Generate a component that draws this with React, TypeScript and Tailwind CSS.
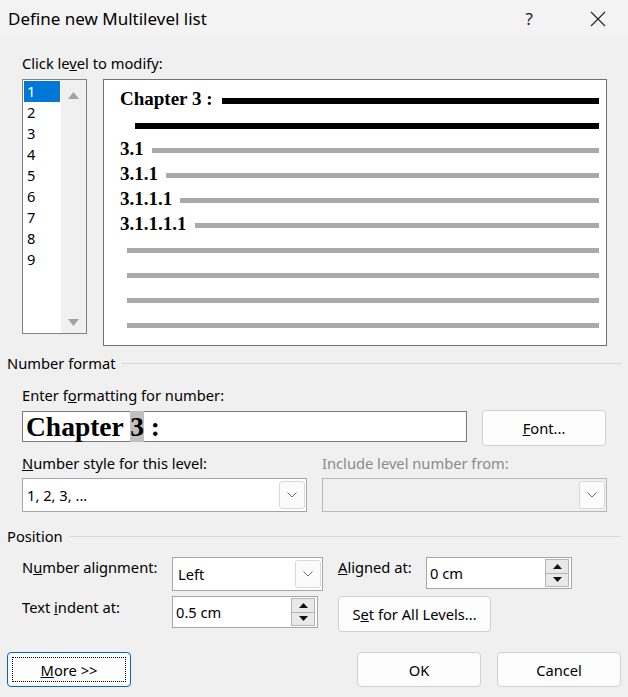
const ui = { fontFamily: '"Noto Sans", "Open Sans", sans-serif' };
const serif = { fontFamily: '"Liberation Serif", "Times New Roman", serif' };

const Chevron = () => (
  <svg width="10" height="6" viewBox="0 0 10 6" fill="none">
    <path d="M0.5 0.5 L5 5 L9.5 0.5" stroke="#6b6b6b" strokeWidth="1" />
  </svg>
);

const Combo = ({ value, disabled, className }: { value?: string; disabled?: boolean; className: string }) => (
  <div
    className={`flex items-center border ${
      disabled ? "bg-[#f0f0f0] border-[#b9b9b9]" : "bg-white border-[#a6a6a6]"
    } ${className}`}
  >
    <div className="flex-1 pl-[4px] leading-[20px] text-black">{value}</div>
    <div className="mr-[1px] flex h-[28px] w-[26px] items-center justify-center rounded-[3px] border border-[#d8d8d8] bg-[#fbfbfb]">
      <Chevron />
    </div>
  </div>
);

const Tri = ({ up }: { up?: boolean }) => (
  <svg width="9" height="5" viewBox="0 0 9 5">
    <path d={up ? "M0 5 L4.5 0 L9 5 Z" : "M0 0 L4.5 5 L9 0 Z"} fill="#111" />
  </svg>
);

const Spin = ({ value, className }: { value: string; className: string }) => (
  <div className={`flex items-center border border-[#a6a6a6] bg-white ${className}`}>
    <div className="flex-1 pl-[3px] leading-[20px] text-black">{value}</div>
    <div className="mr-[2px] flex h-[28px] w-[24px] flex-col">
      <div className="flex flex-1 items-center justify-center border border-b-0 border-[#b4b4b4] bg-[#e9e9e9]">
        <Tri up />
      </div>
      <div className="flex flex-1 items-center justify-center border border-[#b4b4b4] bg-[#e9e9e9]">
        <Tri />
      </div>
    </div>
  </div>
);

const Btn = ({ children, className }: { children: React.ReactNode; className: string }) => (
  <div
    className={`flex items-center justify-center rounded-[4px] border border-[#d0d0d0] bg-[#fdfdfd] leading-[20px] text-black ${className}`}
  >
    {children}
  </div>
);

const Group = ({ title }: { title: string }) => (
  <div className="flex items-center leading-[20px]">
    <span>{title}</span>
    <div className="ml-[6px] h-px flex-1 bg-[#d9d9d9]" />
  </div>
);

const levels = ["1", "2", "3", "4", "5", "6", "7", "8", "9"];
const numbered = ["3.1", "3.1.1", "3.1.1.1", "3.1.1.1.1"];

export default function App() {
  return (
    <div className="h-[697px] w-[628px] overflow-hidden bg-[#f0f0f0] text-[14.7px] text-black" style={ui}>
      {/* Title bar */}
      <div className="flex h-[37px] items-center bg-[#f3f3f3] pt-px pl-[8px] text-[17px]">
        <span className="flex-1">Define new Multilevel list</span>
        <span className="mr-[57px] text-[#222]">?</span>
        <svg width="16" height="16" viewBox="0 0 16 16" className="mr-[22px]">
          <path d="M1 1 L15 15 M15 1 L1 15" stroke="#222" strokeWidth="1.1" />
        </svg>
      </div>

      <div className="px-[7px]">
        <div className="mt-[16px] pl-[15px] leading-[20px]">
          Click le<u>v</u>el to modify:
        </div>

        <div className="mt-[6px] flex items-start pl-[15px]">
          {/* Level list */}
          <div className="flex h-[255px] w-[65px] border border-[#828282] bg-white">
            <div className="flex-1 p-px">
              {levels.map((l, i) => (
                <div
                  key={l}
                  className={`h-[21px] pl-[3px] leading-[21px] ${i === 0 ? "bg-[#0078d7] text-white" : ""}`}
                >
                  {l}
                </div>
              ))}
            </div>
            <div className="flex w-[25px] flex-col items-center justify-between bg-[#f0f0f0] pt-[12px] pb-[7px]">
              <svg width="11" height="7" viewBox="0 0 11 7">
                <path d="M0 7 L5.5 0 L11 7 Z" fill="#a3a3a3" />
              </svg>
              <svg width="11" height="7" viewBox="0 0 11 7">
                <path d="M0 0 L5.5 7 L11 0 Z" fill="#a3a3a3" />
              </svg>
            </div>
          </div>

          {/* Preview */}
          <div className="ml-[16px] h-[267px] w-[504px] border border-[#707070] bg-white pt-[8px] pr-[7px] pl-[16px]" style={serif}>
            <div className="flex h-[25px] items-center">
              <span className="-mt-[4px] text-[19px] leading-[21px] font-bold">Chapter 3 :</span>
              <div className="ml-[9px] h-[6px] flex-1 bg-black" />
            </div>
            <div className="flex h-[25px] items-center">
              <div className="ml-[15px] h-[6px] flex-1 bg-black" />
            </div>
            {numbered.map((n) => (
              <div key={n} className="flex h-[25px] items-center">
                <span className="-mt-[4px] text-[19px] leading-[21px] font-bold">{n}</span>
                <div className="ml-[8px] h-[5px] flex-1 bg-[#a9a9a9]" />
              </div>
            ))}
            {[0, 1, 2, 3].map((k) => (
              <div key={k} className="flex h-[25px] items-center">
                <div className="ml-[7px] h-[5px] flex-1 bg-[#a9a9a9]" />
              </div>
            ))}
          </div>
        </div>

        {/* Number format */}
        <div className="mt-[7px]">
          <Group title="Number format" />
        </div>
        <div className="pl-[15px]">
          <div className="mt-[12px] leading-[20px]">
            Enter f<u>o</u>rmatting for number:
          </div>
          <div className="mt-[6px] flex h-[31px] items-start">
            <div className="h-[31px] w-[445px] border border-[#7a7a7a] bg-white pl-[3px]" style={serif}>
              <span className="text-[27.5px] leading-[29px] font-bold">
                Chapter <span className="bg-[#c0c0c0]">3</span> :
              </span>
            </div>
            <Btn className="-mt-px ml-[15px] h-[36px] w-[124px]">
              <span>
                <u>F</u>ont...
              </span>
            </Btn>
          </div>

          <div className="mt-[11px] flex leading-[20px]">
            <div className="w-[300px]">
              <u>N</u>umber style for this level:
            </div>
            <div className="text-[#8a8a8a]">Include level number from:</div>
          </div>
          <div className="mt-[5px] flex">
            <Combo value="1, 2, 3, ..." className="h-[34px] w-[285px]" />
            <Combo disabled className="ml-[15px] h-[34px] w-[285px]" />
          </div>
        </div>

        {/* Position */}
        <div className="mt-[14px]">
          <Group title="Position" />
        </div>
        <div className="pl-[15px]">
          <div className="mt-[11px] flex items-start">
            <div className="w-[150px] leading-[20px]">
              N<u>u</u>mber alignment:
            </div>
            <Combo value="Left" className="h-[34px] w-[151px] [&>div:first-child]:pl-[5px]" />
            <div className="ml-[15px] w-[88px] leading-[20px]">
              <u>A</u>ligned at:
            </div>
            <Spin value="0 cm" className="h-[32px] w-[146px]" />
          </div>
          <div className="mt-[5px] flex items-start">
            <div className="mt-px w-[150px] leading-[20px]">
              Text <u>i</u>ndent at:
            </div>
            <Spin value="0.5 cm" className="h-[32px] w-[146px]" />
            <Btn className="ml-[20px] h-[36px] w-[153px]">
              <span>
                S<u>e</u>t for All Levels...
              </span>
            </Btn>
          </div>
        </div>

        {/* Bottom buttons */}
        <div className="mt-[20px] flex items-start">
          <div className="flex h-[35px] w-[124px] items-center justify-center rounded-[4px] border border-[#0067c0] bg-[#fdfdfd] p-[4px]">
            <div className="flex h-full w-full items-center justify-center border border-dotted border-black leading-[20px]">
              <span>
                <u>M</u>ore &gt;&gt;
              </span>
            </div>
          </div>
          <div className="flex-1" />
          <Btn className="h-[35px] w-[124px]">OK</Btn>
          <Btn className="ml-[16px] h-[35px] w-[124px]">Cancel</Btn>
        </div>
      </div>
    </div>
  );
}
